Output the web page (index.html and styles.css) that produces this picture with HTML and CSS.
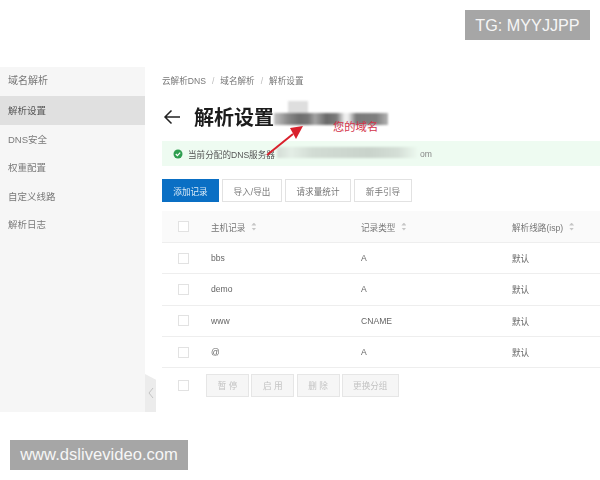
FILE: index.html
```html
<!DOCTYPE html>
<html lang="zh-CN">
<head>
    <meta charset="UTF-8">
    <title>解析设置</title>
    <link rel="stylesheet" href="styles.css">
</head>
<body>
    <div class="mark mark-top">TG: MYYJJPP</div>

    <div class="app">
        <div class="sidebar">
            <div class="side-title">域名解析</div>
            <div class="side-item active">解析设置</div>
            <div class="side-item">DNS安全</div>
            <div class="side-item">权重配置</div>
            <div class="side-item">自定义线路</div>
            <div class="side-item">解析日志</div>
        </div>

        <div class="collapse">
            <svg width="6" height="12" viewBox="0 0 6 12"><path d="M5 1 1 6l4 5" fill="none" stroke="#c4c4c4" stroke-width="1"/></svg>
        </div>

        <div class="main">
            <div class="crumbs">
                <span>云解析DNS</span><span class="sep">/</span><span>域名解析</span><span class="sep">/</span><span>解析设置</span>
            </div>

            <div class="title-row">
                <svg class="back" width="18" height="16" viewBox="0 0 18 16"><path d="M17 8H2M8.500 1.500 2 8l6.500 6.500" fill="none" stroke="#222" stroke-width="1.500"/></svg>
                <h1>解析设置</h1>
            </div>

            <div class="notice">
                <svg width="10" height="10" viewBox="0 0 10 10"><circle cx="5" cy="5" r="4.500" fill="#2e9e4f"/><path d="M2.800 5 4.400 6.600 7.200 3.600" fill="none" stroke="#fff" stroke-width="1.200"/></svg>
                <span>当前分配的DNS服务器</span>
                <span class="notice-end">om</span>
            </div>

            <div class="toolbar">
                <button class="btn primary">添加记录</button>
                <button class="btn w-60">导入/导出</button>
                <button class="btn w-66">请求量统计</button>
                <button class="btn w-58">新手引导</button>
            </div>

            <div class="row head">
                <span class="check"></span>
                <span class="cell">主机记录<i class="sort"></i></span>
                <span class="cell">记录类型<i class="sort"></i></span>
                <span class="cell">解析线路(isp)<i class="sort"></i></span>
            </div>
            <div class="row">
                <span class="check"></span><span class="cell">bbs</span><span class="cell">A</span><span class="cell">默认</span>
            </div>
            <div class="row">
                <span class="check"></span><span class="cell">demo</span><span class="cell">A</span><span class="cell">默认</span>
            </div>
            <div class="row">
                <span class="check"></span><span class="cell">www</span><span class="cell">CNAME</span><span class="cell">默认</span>
            </div>
            <div class="row">
                <span class="check"></span><span class="cell">@</span><span class="cell">A</span><span class="cell">默认</span>
            </div>

            <div class="table-foot">
                <span class="check"></span>
                <div class="foot-btns">
                    <button class="btn off w-43">暂 停</button>
                    <button class="btn off w-43">启 用</button>
                    <button class="btn off w-43">删 除</button>
                    <button class="btn off w-57">更换分组</button>
                </div>
            </div>
        </div>

        <!-- smudges and the red note lie over the page -->
        <div class="smudge smudge-top"></div>
        <div class="smudge smudge-title"></div>
        <div class="smudge smudge-notice"></div>
        <div class="note">您的域名</div>
        <svg class="arrow" width="50" height="50" viewBox="0 0 50 50"><path d="M1 41 27 20" stroke="#d9202c" stroke-width="2"/><path d="M37 12 24 14 30 25Z" fill="#d9202c"/></svg>
    </div>

    <div class="mark mark-bottom">www.dslivevideo.com</div>
</body>
</html>
```

FILE: styles.css
```css
* {
    margin: 0;
    padding: 0;
    box-sizing: border-box;
    font-family: "Liberation Sans", "Noto Sans CJK SC", sans-serif;
}

body {
    background-color: #fff;
    width: 600px;
    height: 480px;
    overflow: hidden;
    position: relative;
}

.mark {
    position: absolute;
    background-color: #a6a6a6;
    color: #f6f6f6;
    font-size: 16.600px;
    height: 30px;
    line-height: 30px;
    text-align: center;
    z-index: 10;
}

.mark-top {
    top: 10px;
    left: 465px;
    width: 125px;
    font-size: 16.200px;
}

.mark-bottom {
    top: 440px;
    left: 10px;
    width: 178px;
}

.app {
    position: absolute;
    top: 67px;
    left: 0;
    width: 600px;
    height: 345px;
    display: flex;
    overflow: hidden;
}

.sidebar {
    width: 145px;
    flex-shrink: 0;
    background-color: #f6f6f6;
    color: #7a7a7a;
    font-size: 9.500px;
    filter: blur(0.3px);
}

.side-title {
    height: 29px;
    line-height: 27px;
    padding-left: 8px;
    font-size: 10px;
    color: #777;
}

.side-item {
    height: 28.500px;
    line-height: 30px;
    padding-left: 8px;
}

.side-item.active {
    background-color: #e0e0e0;
    color: #555;
}

.collapse {
    position: absolute;
    left: 145px;
    top: 307px;
    width: 11px;
    height: 38px;
    background-color: #ececec;
    clip-path: polygon(0 0, 100% 15%, 100% 100%, 0 100%);
    display: flex;
    align-items: center;
    justify-content: center;
}

.main {
    flex: 1;
    padding-left: 17px;
    color: #666;
    font-size: 8.600px;
    min-width: 0;
    filter: blur(0.3px);
}

.crumbs {
    height: 28px;
    padding-top: 9px;
    line-height: 11px;
    color: #777;
    white-space: nowrap;
}

.sep {
    color: #bbb;
    margin: 0 6px;
}

.title-row {
    height: 46px;
    display: flex;
    align-items: center;
    padding-top: 1px;
    padding-bottom: 4px;
}

.back {
    margin-left: 1px;
    margin-right: 13px;
}

h1 {
    font-size: 20px;
    font-weight: bold;
    color: #1c1c1c;
}

.notice {
    height: 25px;
    background-color: #eefbf1;
    display: flex;
    align-items: center;
    padding-left: 11px;
    color: #555;
}

.notice svg {
    margin-right: 5px;
}

.notice-end {
    margin-left: 145px;
    color: #888;
}

.toolbar {
    margin-top: 13px;
    display: flex;
    gap: 3px;
    height: 23px;
}

.btn {
    height: 23px;
    border: 1px solid #e2e2e2;
    background-color: #fff;
    color: #777;
    font-size: 8.600px;
    flex-shrink: 0;
}

.btn.primary {
    width: 57px;
    background-color: #0a6fc4;
    border-color: #0a6fc4;
    color: #dcecf8;
}

.w-60 {
    width: 60px;
}

.w-66 {
    width: 66px;
}

.w-58 {
    width: 58px;
}

.w-57 {
    width: 57px;
}

.w-43 {
    width: 43px;
}

.btn.off {
    background-color: #f6f6f6;
    border-color: #e6e6e6;
    color: #c2c2c2;
}

.row {
    display: grid;
    grid-template-columns: 49px 150px 151px 1fr;
    align-items: center;
    height: 31.300px;
    border-bottom: 1px solid #eeeeee;
}

.row.head {
    margin-top: 9px;
    height: 32px;
    background-color: #fafafa;
    color: #777;
}

.check {
    display: block;
    width: 11px;
    height: 11px;
    margin-left: 16px;
    border: 1px solid #e2e2e2;
    background-color: #fff;
}

.cell {
    display: flex;
    align-items: center;
    white-space: nowrap;
}

.sort {
    display: flex;
    flex-direction: column;
    gap: 2px;
    margin-left: 6px;
}

.sort::before,
.sort::after {
    content: "";
    display: block;
    width: 5px;
    height: 3px;
    background-color: #c6c6c6;
}

.sort::before {
    clip-path: polygon(50% 0, 100% 100%, 0 100%);
}

.sort::after {
    clip-path: polygon(0 0, 100% 0, 50% 100%);
}

.table-foot {
    display: flex;
    align-items: center;
    height: 34px;
}

.table-foot .check {
    margin-right: 17px;
}

.foot-btns {
    display: flex;
    gap: 2.250px;
}

.smudge {
    position: absolute;
    filter: blur(1.200px);
}

.smudge-title {
    left: 274px;
    top: 46px;
    width: 114px;
    height: 12px;
    background: linear-gradient(90deg, #c4c4c4 0, #8a8a8a 12%, #6e6e6e 22%, #777 30%, #a4a4a4 36%, #6a6a6a 46%, #7c7c7c 55%, #f0f0f0 62%, #eee 65%, #7a7a7a 72%, #808080 90%, #b4b4b4 100%);
}

.smudge-top {
    left: 288px;
    top: 34px;
    width: 20px;
    height: 13px;
    background-color: #dedede;
}

.smudge-notice {
    left: 277px;
    top: 80px;
    width: 142px;
    height: 11px;
    background: linear-gradient(90deg, #d4ddd6 0, #e4eee6 10%, #d2dcd4 25%, #c9d3cb 65%, #d4ded6 85%, #eefbf1 100%);
}

.note {
    position: absolute;
    left: 333px;
    top: 53px;
    font-size: 11.300px;
    line-height: 14px;
    color: #d3334a;
}

.arrow {
    position: absolute;
    left: 266px;
    top: 47px;
}
```
